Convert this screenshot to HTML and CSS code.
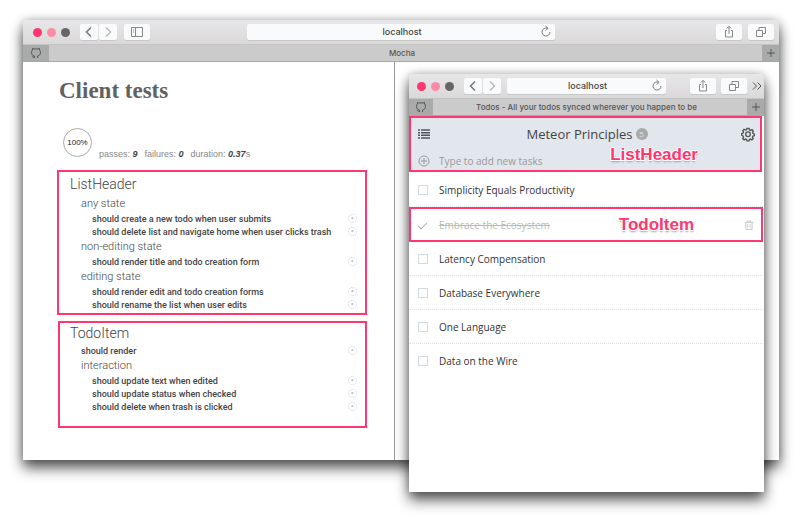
FILE: index.html
```html
<!DOCTYPE html>
<html lang="en">
<head>
<meta charset="utf-8">
<title>Mocha</title>
<link rel="stylesheet" href="styles.css">
</head>
<body>
<svg class="symbols" aria-hidden="true">
  <symbol id="back" viewBox="0 0 16 16"><path d="M10 3.5 5.5 8l4.500 4.500"/></symbol>
  <symbol id="forward" viewBox="0 0 16 16"><path d="M6 3.500 10.500 8 6 12.500"/></symbol>
  <symbol id="sidebar" viewBox="0 0 16 16"><path d="M2.500 3.500h11v9h-11zM6.500 3.500v9M4 6h1M4 8h1"/></symbol>
  <symbol id="reload" viewBox="0 0 16 16"><path d="M12 8a4 4 0 1 1-2.500-3.700M7.500 2l2.500 2.300L7.800 6.500"/></symbol>
  <symbol id="share" viewBox="0 0 16 16"><path d="M6 6.500H4.500v6.500h7V6.500H10M8 10V2.500M5.800 4.500 8 2.300l2.200 2.200"/></symbol>
  <symbol id="tabs" viewBox="0 0 16 16"><path d="M3.500 6.500h6v6h-6zM6 6V3.500h6.500v6H10"/></symbol>
  <symbol id="more" viewBox="0 0 10 16"><path d="M1 4.500 4.500 8 1 11.500M5.500 4.500 9 8l-3.500 3.500"/></symbol>
  <symbol id="plus" viewBox="0 0 16 16"><path d="M8 4v8M4 8h8"/></symbol>
  <symbol id="octocat" viewBox="0 0 16 16"><path d="M6.500 13v-2C4.500 10.500 3.500 9.500 3.500 7.500c0-1.200.4-2 1-2.600V3.400l1.600.7c1.200-.4 2.600-.4 3.800 0l1.600-.7v1.500c.6.6 1 1.400 1 2.600 0 2-1 3-3 3.500v2M6.300 12c-1.500.4-1.800-.4-2.500-.9"/></symbol>
</svg>
<main class="desktop">
  <section class="window window-tests">
    <div class="toolbar">
      <div class="group">
        <span class="dot dot-close"></span><span class="dot dot-min"></span><span class="dot dot-max"></span>
        <div class="nav">
          <button class="tool nav-tool" aria-label="Back"><svg class="icon"><use href="#back"/></svg></button>
          <button class="tool nav-tool dim" aria-label="Forward"><svg class="icon"><use href="#forward"/></svg></button>
        </div>
        <button class="tool" aria-label="Sidebar"><svg class="icon"><use href="#sidebar"/></svg></button>
      </div>
      <div class="address">
        <input class="url" aria-label="Address" value="localhost">
        <button class="reload" aria-label="Reload"><svg class="icon"><use href="#reload"/></svg></button>
      </div>
      <div class="group group-end">
        <button class="tool" aria-label="Share"><svg class="icon"><use href="#share"/></svg></button>
        <button class="tool" aria-label="Tabs"><svg class="icon"><use href="#tabs"/></svg></button>
      </div>
    </div>
    <div class="tabbar">
      <span class="pinned"><svg class="icon"><use href="#octocat"/></svg></span>
      <span class="tab">Mocha</span>
      <button class="newtab" aria-label="New tab"><svg class="icon"><use href="#plus"/></svg></button>
    </div>
    <div class="panes">
      <div class="report">
        <h1 class="title">Client tests</h1>
        <div class="stats">
          <span class="progress">100%</span>
          <span>passes: <em>9</em></span>
          <span>failures: <em>0</em></span>
          <span>duration: <em>0.37</em>s</span>
        </div>
        <section class="suite suite-header">
          <h2>ListHeader</h2>
          <h3>any state</h3>
          <ul>
            <li>should create a new todo when user submits<a class="replay" href="#" aria-label="Replay">‣</a></li>
            <li>should delete list and navigate home when user clicks trash<a class="replay" href="#" aria-label="Replay">‣</a></li>
          </ul>
          <h3>non-editing state</h3>
          <ul>
            <li>should render title and todo creation form<a class="replay" href="#" aria-label="Replay">‣</a></li>
          </ul>
          <h3>editing state</h3>
          <ul>
            <li>should render edit and todo creation forms<a class="replay" href="#" aria-label="Replay">‣</a></li>
            <li>should rename the list when user edits<a class="replay" href="#" aria-label="Replay">‣</a></li>
          </ul>
        </section>
        <section class="suite suite-item">
          <h2>TodoItem</h2>
          <ul class="direct">
            <li>should render<a class="replay" href="#" aria-label="Replay">‣</a></li>
          </ul>
          <h3>interaction</h3>
          <ul>
            <li>should update text when edited<a class="replay" href="#" aria-label="Replay">‣</a></li>
            <li>should update status when checked<a class="replay" href="#" aria-label="Replay">‣</a></li>
            <li>should delete when trash is clicked<a class="replay" href="#" aria-label="Replay">‣</a></li>
          </ul>
        </section>
      </div>
      <div class="preview"></div>
    </div>
  </section>

  <section class="window window-app">
    <div class="toolbar">
      <div class="group">
        <span class="dot dot-close"></span><span class="dot dot-min"></span><span class="dot dot-max"></span>
        <div class="nav">
          <button class="tool nav-tool" aria-label="Back"><svg class="icon"><use href="#back"/></svg></button>
          <button class="tool nav-tool dim" aria-label="Forward"><svg class="icon"><use href="#forward"/></svg></button>
        </div>
      </div>
      <div class="address">
        <input class="url" aria-label="Address" value="localhost">
        <button class="reload" aria-label="Reload"><svg class="icon"><use href="#reload"/></svg></button>
      </div>
      <div class="group group-end">
        <button class="tool" aria-label="Share"><svg class="icon"><use href="#share"/></svg></button>
        <button class="tool" aria-label="Tabs"><svg class="icon"><use href="#tabs"/></svg></button>
        <button class="more" aria-label="More"><svg class="icon icon-more"><use href="#more"/></svg></button>
      </div>
    </div>
    <div class="tabbar">
      <span class="pinned"><svg class="icon"><use href="#octocat"/></svg></span>
      <span class="tab">Todos - All your todos synced wherever you happen to be</span>
      <button class="newtab" aria-label="New tab"><svg class="icon"><use href="#plus"/></svg></button>
    </div>
    <div class="app">
      <header class="listheader">
        <div class="heading">
          <button class="plain" aria-label="Menu"><svg class="icon menu-icon" viewBox="0 0 16 16"><path d="M2 4h2M5 4h9M2 6.700h2M5 6.700h9M2 9.300h2M5 9.300h9M2 12h2M5 12h9"/></svg></button>
          <h1 class="listname">Meteor Principles <span class="count">5</span></h1>
          <button class="plain" aria-label="Settings"><svg class="icon gear" viewBox="-1 -1 18 18"><path d="M6.800 1.700h2.400l.4 1.700 1.300.6 1.600-.9 1.500 1.600-.9 1.500.5 1.300 1.500.4v2l-1.500.4-.6 1.300.9 1.500-1.500 1.500-1.500-.9-1.300.5-.4 1.500H6.800l-.4-1.500-1.300-.5-1.500.9-1.500-1.500.9-1.500-.6-1.300L.9 9.400V7.400L2.400 7l.6-1.300-.9-1.500 1.500-1.500 1.500.9 1.300-.5z"/><circle cx="8" cy="8.300" r="2.600"/></svg></button>
        </div>
        <label class="newtask">
          <svg class="icon" viewBox="0 0 16 16"><circle cx="8" cy="8" r="5"/><path d="M8 5v6M5 8h6"/></svg>
          <input class="newinput" placeholder="Type to add new tasks">
        </label>
        <span class="callout callout-header">ListHeader</span>
      </header>
      <ul class="todos">
        <li><label class="todo"><input type="checkbox"><span>Simplicity Equals Productivity</span></label></li>
        <li class="marked"><label class="todo done"><input type="checkbox" checked><span>Embrace the Ecosystem</span></label>
          <button class="plain" aria-label="Delete"><svg class="icon trash" viewBox="-1 -1 18 18"><path d="M3 5h10M6 5V3.500h4V5M4.500 5v8h7V5M6.700 7v4M9.300 7v4"/></svg></button>
          <span class="callout callout-item">TodoItem</span></li>
        <li><label class="todo"><input type="checkbox"><span>Latency Compensation</span></label></li>
        <li><label class="todo"><input type="checkbox"><span>Database Everywhere</span></label></li>
        <li><label class="todo"><input type="checkbox"><span>One Language</span></label></li>
        <li><label class="todo"><input type="checkbox"><span>Data on the Wire</span></label></li>
      </ul>
    </div>
  </section>
</main>
</body>
</html>
```
FILE: styles.css
```css
* { box-sizing: border-box; }
body { margin: 0; background: #fff; color: #444; font-family: "Liberation Sans", sans-serif; font-size: 9px; }
h1, h2, h3, ul { margin: 0; padding: 0; font-weight: 400; list-style: none; }
button { border: 0; padding: 0; background: none; color: inherit; }
input { margin: 0; border: 0; padding: 0; background: none; font: inherit; color: inherit; }
.symbols { display: none; }
.icon { display: block; width: 16px; height: 16px; fill: none; stroke: currentColor; }

.desktop { position: relative; min-height: 100vh; padding: 20px 21px 0 23px; }
.window { border-radius: 5px 5px 0 0; background: #fff; box-shadow: 0 0 10px rgba(0, 0, 0, .25), 0 8px 14px rgba(0, 0, 0, .65); }
.window-app { position: absolute; top: 74px; left: 409px; right: 36px; }

.toolbar { display: grid; grid-template-columns: minmax(0, 8fr) minmax(0, 11fr) minmax(0, 8fr); align-items: center; height: 25px; border-bottom: 1px solid #c4c4c4; border-radius: 5px 5px 0 0; background: linear-gradient(#e7e7e9, #dbd8d9); }
.window-app .toolbar { grid-template-columns: minmax(0, 8fr) minmax(0, 13fr) minmax(0, 8fr); }
.group { display: flex; align-items: center; gap: 5px; padding: 0 5px 0 10px; }
.window-app .group { padding-left: 8px; }
.group-end { justify-content: flex-end; gap: 6px; }
.dot { flex: none; width: 9px; height: 9px; border-radius: 50%; }
.dot-close { background: #ff3670; }
.dot-min { background: #ff8aa8; }
.dot-max { background: #666; }
.nav { display: flex; gap: 1px; margin: 0 2px 0 5px; }
.tool { display: flex; flex: none; align-items: center; justify-content: center; width: 26px; height: 16px; border-radius: 2px; background: #f9fafb; color: #888; box-shadow: 0 1px 0 #c8c8c8; }
.nav-tool { width: 18px; }
.nav-tool .icon { stroke-width: 1.5; color: #777; }
.dim .icon { color: #bbb; }
.address { display: flex; align-items: center; height: 16px; border-radius: 2px; background: #f9fafb; box-shadow: 0 1px 0 #c8c8c8; }
.url { flex: 1; min-width: 0; padding-left: 19px; font: 500 8px/16px Inter, sans-serif; font-size: 9px; color: #444; text-align: center; }
.reload { width: 17px; color: #777; }
.more { color: #555; }
.icon-more { width: 10px; }
.window-app .group-end { padding-right: 2px; gap: 5px; }

.tabbar { display: flex; height: 17px; border-bottom: 1px solid #a6a6a6; background: #cbcbcb; color: #555; }
.pinned { display: flex; align-items: center; justify-content: center; width: 26px; background: #a9abaa; }
.window-app .pinned { width: 24px; }
.tab { flex: 1; padding-right: 7px; font: 500 8px/17px Inter, sans-serif; text-align: center; }
.newtab { display: flex; align-items: center; justify-content: center; width: 17px; background: #a9abaa; }

.panes { display: flex; min-height: 398px; }
.report { flex: none; width: 372px; padding: 16px 27px 32px 34px; border-right: 1px solid #999; }
.preview { flex: 1; }
.title { padding-left: 2px; font: bold 23px/26px "Liberation Serif", serif; color: #606262; }
.stats { display: flex; align-items: flex-end; gap: 7px; height: 31px; margin: 24px 0 11px 6px; color: #888; line-height: 10px; }
.stats em { font-weight: bold; color: #444; }
.progress { display: flex; align-items: center; justify-content: center; align-self: flex-start; width: 29px; height: 29px; border: 1px solid #aaa; border-radius: 50%; font-size: 8px; color: #222; }

.suite { padding: 0 8px 0 11px; border: 2px solid #ff3670; }
.suite-header { padding-top: 2px; padding-bottom: 2px; }
.suite-item { margin: 6px 0 0 1px; padding-left: 10px; padding-bottom: 13px; }
.suite h2 { margin-bottom: 1px; font: 300 14px/20px Roboto, sans-serif; }
.suite h3 { padding-left: 11px; font: 300 11px/17px Roboto, sans-serif; }
.suite ul { padding-left: 22px; }
.suite .direct { padding-left: 11px; }
.suite li { display: flex; align-items: center; justify-content: space-between; height: 13px; font: 500 9px/12px Roboto, sans-serif; color: #444; }
.replay { width: 9px; height: 9px; border: 1px dotted #ccd3d9; border-radius: 50%; color: #aab; font-size: 8px; line-height: 7px; text-align: center; text-decoration: none; }

.app { min-height: 376px; font-family: "Open Sans", sans-serif; font-size: 10px; }
.listheader { position: relative; height: 56px; margin-right: 2px; border: 2px solid #ff3670; background: #e1e7ed; }
.heading { display: flex; align-items: center; justify-content: space-between; height: 32px; padding: 0 4px 0 5px; }
.listname { display: flex; align-items: center; gap: 3px; padding-left: 2px; font-size: 13px; color: #444; }
.count { width: 12px; height: 12px; border-radius: 50%; background: #aaa; color: #e1e7ed; font-size: 8px; line-height: 12px; text-align: center; }
.menu-icon { color: #555; stroke-width: 1.5; }
.gear { color: #555; stroke-width: 1.5; }
.newtask { display: flex; align-items: center; gap: 7px; height: 21px; padding-left: 5px; color: #999; }
.newinput { width: 150px; }
.newinput::placeholder { color: #999; opacity: 1; }
.todos { padding-top: 1px; }
.todos li { position: relative; display: flex; align-items: center; height: 34px; margin-right: 1px; padding: 0 7px 0 9px; border-bottom: 1px dotted #dfe4e8; }
.todos li:last-child { border-bottom-color: transparent; }
.todos .marked { height: 35px; padding: 0 4px 0 7px; border: 2px solid #ff3670; }
.todo { display: flex; flex: 1; align-items: center; gap: 11px; color: #333; }
.todo input { appearance: none; width: 10px; height: 10px; border: 1px solid #cfdae3; }
.todo input:checked { width: 9px; height: 5px; margin-right: 1px; border-width: 0 0 1px 1px; border-color: #aaa; transform: rotate(-45deg); }
.done { color: #bbb; text-decoration: line-through; }
.trash { color: #c2c2c2; }
.callout { position: absolute; right: 62px; font: bold 17px/20px "Liberation Sans", sans-serif; color: #ff3670; text-shadow: 1px 0 #fff, -1px 0 #fff, 0 1px #fff, 0 -1px #fff, 1px 1px #fff, -1px 1px #fff, 0 2px 2px #999; }
.callout-header { bottom: 5px; }
.callout-item { right: 67px; }
```
